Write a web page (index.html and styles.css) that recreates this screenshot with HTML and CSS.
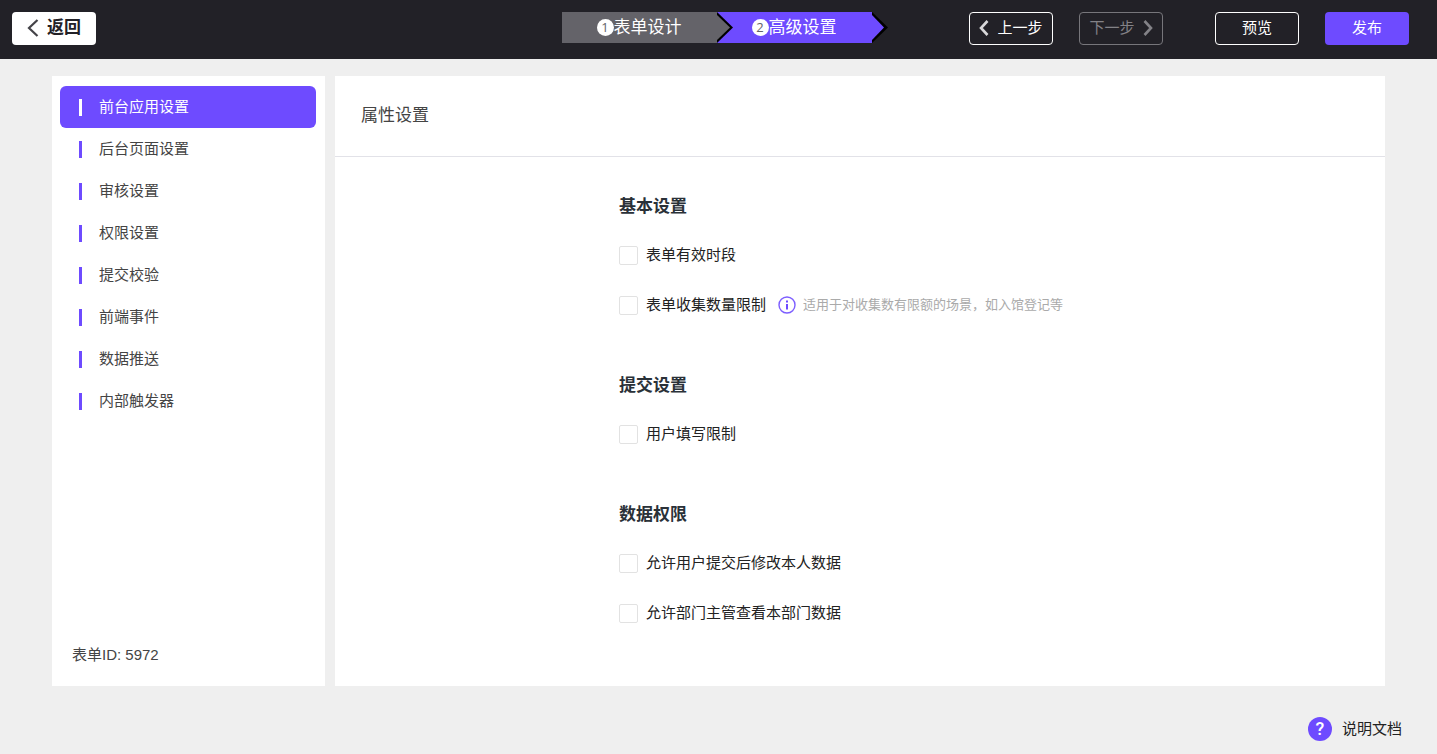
FILE: index.html
```html
<!DOCTYPE html>
<html lang="zh">
<head>
    <meta charset="UTF-8">
    <meta name="viewport" content="width=device-width, initial-scale=1.0">
    <title>高级设置</title>
    <link rel="stylesheet" href="styles.css">
</head>
<body>
    <header class="header">
        <div class="header-left">
            <button type="button" class="btn btn-back">
                <svg width="12" height="18" viewBox="0 0 12 18"><path d="M10.500 1L2 9l8.500 8" fill="none" stroke="#444348" stroke-width="2.200"/></svg>
                返回
            </button>
        </div>
        <nav class="steps">
            <a class="step" href="#design">
                <span class="step-num">1</span>表单设计
                <svg class="step-arrow" width="16" height="31" viewBox="0 0 16 31"><path d="M0 0l16 15.500L0 31z" fill="#000"/><path d="M0 3l13 12.500L0 28z" fill="#646369"/></svg>
            </a>
            <a class="step active" href="#advanced">
                <span class="step-num">2</span>高级设置
                <svg class="step-arrow" width="16" height="31" viewBox="0 0 16 31"><path d="M0 0l16 15.500L0 31z" fill="#000"/><path d="M0 3l12 12.500L0 28z" fill="#6e4bff"/></svg>
            </a>
        </nav>
        <div class="header-right">
            <div class="btn-group">
                <button type="button" class="btn btn-line">
                    <svg width="10" height="16" viewBox="0 0 10 16"><path d="M8.500 1L2 8l6.500 7" fill="none" stroke="#d8d8da" stroke-width="2.600"/></svg>
                    上一步
                </button>
                <button type="button" class="btn btn-line" disabled>
                    下一步
                    <svg width="10" height="16" viewBox="0 0 10 16"><path d="M1.500 1L8 8l-6.500 7" fill="none" stroke="currentColor" stroke-width="2.600"/></svg>
                </button>
            </div>
            <div class="btn-group">
                <button type="button" class="btn btn-line">预览</button>
                <button type="button" class="btn btn-primary">发布</button>
            </div>
        </div>
    </header>

    <div class="container">
        <aside class="sidebar">
            <nav class="menu">
                <a class="menu-item active" href="#front">前台应用设置</a>
                <a class="menu-item" href="#back">后台页面设置</a>
                <a class="menu-item" href="#audit">审核设置</a>
                <a class="menu-item" href="#auth">权限设置</a>
                <a class="menu-item" href="#check">提交校验</a>
                <a class="menu-item" href="#event">前端事件</a>
                <a class="menu-item" href="#push">数据推送</a>
                <a class="menu-item" href="#trigger">内部触发器</a>
            </nav>
            <div class="form-id">表单ID: 5972</div>
        </aside>

        <main class="main">
            <h1 class="main-title">属性设置</h1>
            <div class="settings">
                <section class="section">
                    <h2 class="section-title">基本设置</h2>
                    <div class="option">
                        <input type="checkbox" id="period">
                        <label for="period">表单有效时段</label>
                    </div>
                    <div class="option">
                        <input type="checkbox" id="limit">
                        <label for="limit">表单收集数量限制</label>
                        <svg class="info-icon" width="18" height="18" viewBox="0 0 18 18"><circle cx="9" cy="9" r="8" fill="none" stroke="#7d5eff" stroke-width="1.400"/><path d="M8 4.500h2v2H8zM8 8h2v5.500H8z" fill="#6e4bff"/></svg>
                        <span class="hint">适用于对收集数有限额的场景，如入馆登记等</span>
                    </div>
                </section>
                <section class="section">
                    <h2 class="section-title">提交设置</h2>
                    <div class="option">
                        <input type="checkbox" id="user">
                        <label for="user">用户填写限制</label>
                    </div>
                </section>
                <section class="section">
                    <h2 class="section-title">数据权限</h2>
                    <div class="option">
                        <input type="checkbox" id="modify">
                        <label for="modify">允许用户提交后修改本人数据</label>
                    </div>
                    <div class="option">
                        <input type="checkbox" id="view">
                        <label for="view">允许部门主管查看本部门数据</label>
                    </div>
                </section>
            </div>
        </main>
    </div>

    <footer class="footer">
        <a class="doc-link" href="#doc"><span class="doc-icon">?</span>说明文档</a>
    </footer>
</body>
</html>
```
FILE: styles.css
```css
* {
    margin: 0;
    padding: 0;
    box-sizing: border-box;
}

body {
    display: flex;
    flex-direction: column;
    min-height: 100vh;
    background-color: #efefef;
    font-family: "Liberation Sans", "Noto Sans CJK SC", sans-serif;
    font-size: 15px;
    line-height: 20px;
    color: #222;
}

a {
    color: inherit;
    text-decoration: none;
}

/* 顶部栏 */
.header {
    display: grid;
    grid-template-columns: 1fr auto 1fr;
    align-items: start;
    height: 59px;
    padding-top: 12px;
    background-color: #222127;
}

.header-left {
    padding-left: 12px;
}

.header-right {
    display: flex;
    justify-content: flex-end;
    gap: 52px;
    padding-right: 28px;
}

.btn-group {
    display: flex;
    gap: 26px;
}

.btn {
    display: flex;
    justify-content: center;
    align-items: center;
    gap: 8px;
    width: 84px;
    height: 33px;
    padding-bottom: 2px;
    border: 1px solid transparent;
    border-radius: 4px;
    font-family: inherit;
    font-size: 15px;
    line-height: 20px;
    white-space: nowrap;
    color: #fff;
    cursor: pointer;
}

.btn-back {
    background-color: #fff;
    font-size: 17px;
    font-weight: bold;
    color: #222127;
}

.btn-line {
    background-color: transparent;
    border-color: #fff;
}

.btn-line:disabled {
    border-color: #77767b;
    color: #838287;
}

.btn-primary {
    background-color: #6e4bff;
}

/* 步骤条 */
.steps {
    display: flex;
    padding-right: 4px;
}

.step {
    position: relative;
    display: flex;
    justify-content: center;
    align-items: center;
    width: 155px;
    height: 31px;
    background-color: #646369;
    font-size: 17px;
    color: #fff;
}

.step.active {
    background-color: #6e4bff;
}

.step-num {
    width: 17px;
    height: 17px;
    border-radius: 50%;
    background-color: #fff;
    font-family: "Open Sans", sans-serif;
    font-size: 13px;
    line-height: 17px;
    text-align: center;
    color: #646369;
}

.step-arrow {
    position: absolute;
    top: 0;
    left: 100%;
    z-index: 1;
}

/* 内容区 */
.container {
    display: flex;
    flex: 1;
    gap: 10px;
    padding: 17px 52px 0;
}

.sidebar {
    display: flex;
    flex-direction: column;
    justify-content: space-between;
    width: 273px;
    padding: 10px 9px 21px 8px;
    background-color: #fff;
    color: #444;
}

.menu-item {
    display: flex;
    align-items: center;
    gap: 17px;
    height: 42px;
    padding-left: 19px;
    border-radius: 6px;
}

.menu-item::before {
    content: "";
    width: 3px;
    height: 17px;
    background-color: #6e4bff;
}

.menu-item.active {
    background-color: #6e4bff;
    color: #fff;
}

.menu-item.active::before {
    background-color: #fff;
}

.form-id {
    padding-left: 12px;
}

.main {
    flex: 1;
    background-color: #fff;
}

.main-title {
    padding: 30px 26px;
    border-bottom: 1px solid #e2e2e8;
    font-size: 17px;
    font-weight: normal;
    line-height: 20px;
    color: #444;
}

.settings {
    width: 482px;
    margin: 0 auto;
    padding-top: 40px;
}

.section {
    margin-bottom: 61px;
}

.section-title {
    margin-bottom: 28px;
    font-size: 17px;
    line-height: 20px;
    color: #2a3138;
}

.option {
    display: flex;
    align-items: center;
    height: 20px;
}

.option + .option {
    margin-top: 30px;
}

.option input {
    appearance: none;
    width: 19px;
    height: 19px;
    margin-right: 8px;
    border: 1px solid #e2e2e2;
    border-radius: 2px;
    background-color: #fff;
}

.option input:checked {
    background-color: #6e4bff;
}

.info-icon {
    margin: 0 7px 0 12px;
}

.hint {
    font-size: 13px;
    white-space: nowrap;
    color: #aaa;
}

/* 底部 */
.footer {
    display: flex;
    justify-content: flex-end;
    padding: 31px 35px 13px;
}

.doc-link {
    display: flex;
    align-items: center;
    gap: 10px;
}

.doc-icon {
    width: 24px;
    height: 24px;
    border-radius: 50%;
    background-color: #6e4bff;
    font-family: Roboto, sans-serif;
    font-size: 18px;
    font-weight: 500;
    line-height: 24px;
    text-align: center;
    color: #fff;
}
```
